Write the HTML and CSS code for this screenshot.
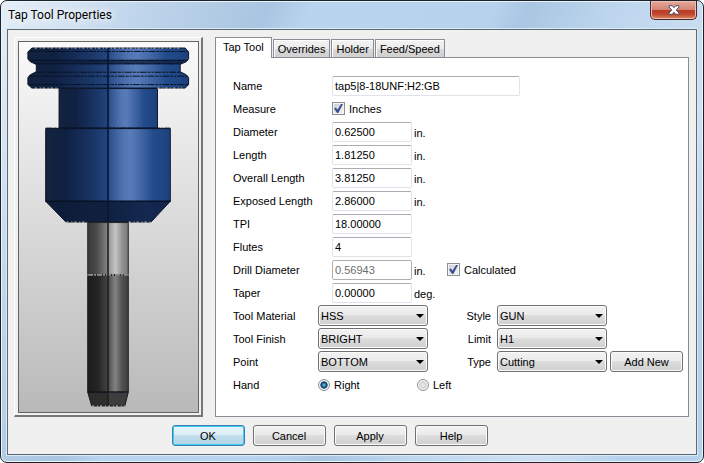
FILE: index.html
```html
<!DOCTYPE html>
<html lang="en">
<head>
<meta charset="utf-8">
<title>Tap Tool Properties</title>
<link rel="stylesheet" href="styles.css">
</head>
<body>
<main class="window">
  <header class="titlebar">
    <h1 class="title">Tap Tool Properties</h1>
    <button class="close" type="button" aria-label="Close">
      <svg width="12" height="10" viewBox="0 0 12 10"><path d="M1 .7h3.2L6 2.7 7.800 .7H11v1.200L8.300 5 11 8.100v1.200H7.800L6 7.300 4.200 9.300H1V8.100L3.700 5 1 1.900z" fill="#fff" stroke="#4a4f63" stroke-width="1"/></svg>
    </button>
  </header>
  <form class="client">
    <div class="content">
      <div class="preview">
        <svg class="tool" viewBox="18 41 181 374" role="img" aria-label="Tool preview">
          <defs>
            <linearGradient id="blue">
              <stop offset="0" stop-color="#13233f"/><stop offset=".16" stop-color="#0f2142"/><stop offset=".28" stop-color="#152b57"/><stop offset=".4" stop-color="#1b3869"/><stop offset=".5" stop-color="#234580"/><stop offset=".52" stop-color="#31528e"/><stop offset=".62" stop-color="#4f73b1"/><stop offset=".68" stop-color="#587cba"/><stop offset=".76" stop-color="#4468a6"/><stop offset=".86" stop-color="#234c8c"/><stop offset="1" stop-color="#1c407c"/>
            </linearGradient>
            <linearGradient id="steel">
              <stop offset="0" stop-color="#3b3b3b"/><stop offset=".2" stop-color="#484848"/><stop offset=".5" stop-color="#858585"/><stop offset=".54" stop-color="#9c9c9c"/><stop offset=".68" stop-color="#c4c4c4"/><stop offset=".85" stop-color="#929292"/><stop offset="1" stop-color="#777"/>
            </linearGradient>
            <linearGradient id="dark">
              <stop offset="0" stop-color="#1d1d1d"/><stop offset=".25" stop-color="#242424"/><stop offset=".5" stop-color="#454545"/><stop offset=".55" stop-color="#5b5b5b"/><stop offset=".68" stop-color="#828282"/><stop offset=".85" stop-color="#505050"/><stop offset="1" stop-color="#404040"/>
            </linearGradient>
            <linearGradient id="cone">
              <stop offset="0" stop-color="#0d1b36"/><stop offset=".5" stop-color="#102040"/><stop offset=".8" stop-color="#142850"/><stop offset="1" stop-color="#11244b"/>
            </linearGradient>
          </defs>
          <g stroke="#0b1424">
            <path d="M31 47H186L189.500 51V58L187 61 181 63.500V71L187 74 189.500 77V84L186 87.500H31L27 84V77L29.500 74 35.500 71V63.500L29.500 61 27 58V51Z" fill="url(#blue)"/>
            <path d="M29 59H188L181 63.500H35.500Z" fill="#0d1d3b" fill-opacity=".75" stroke="none"/>
            <path d="M58.500 88H158V128H58.500Z" fill="url(#blue)"/>
            <path d="M45 128.500H171V202H45Z" fill="url(#blue)"/>
            <path d="M45 202H171L151.500 223H65.500Z" fill="url(#cone)"/>
            <path d="M87.500 223.500H128.500V276H87.500Z" fill="url(#steel)" stroke="#222"/>
            <path d="M87.500 277H128.500V395H87.500Z" fill="url(#dark)" stroke="#181818"/>
            <path d="M87.500 395H128.500L125 409H91.500Z" fill="#2d2d2d" stroke="#181818"/>
            <path d="M108 395H128L124.500 408H108Z" fill="#3d3d3d" stroke="none"/>
          </g>
          <g fill="none" stroke="#071124" stroke-dasharray="7 1 3 1 2 1">
            <path d="M29 50.500H188M28 59.500H188M34 63H182M35 71.500H182M28 75.500H189M28 84H189M45 128H171M45 202H171"/>
            <path d="M88 395H128"/>
          </g>
          <path d="M34 47H183M34 87.500H58M158 87.500H183M66 223H87M129 223H151M92 409H125" stroke="#d5d8dc" stroke-dasharray="2 3 1 2" fill="none"/>
          <path d="M88 276.500H128" stroke="#e8e8e8" stroke-dasharray="5 1 2 1"/>
          <path d="M108 47V223" stroke="#0a1832" stroke-width="1.600"/>
          <path d="M108 223V409" stroke="#202020" stroke-width="1.600"/>
        </svg>
      </div>
      <section class="tabs">
        <div class="tablist" role="tablist">
          <button class="tab active" type="button" role="tab" aria-selected="true">Tap Tool</button>
          <button class="tab" type="button" role="tab" aria-selected="false">Overrides</button>
          <button class="tab" type="button" role="tab" aria-selected="false">Holder</button>
          <button class="tab" type="button" role="tab" aria-selected="false">Feed/Speed</button>
        </div>
        <div class="page" role="tabpanel">
          <div class="row"><label class="name" for="name">Name</label><input class="text wide" id="name" type="text" value="tap5|8-18UNF:H2:GB"></div>
          <div class="row"><span class="name">Measure</span><label class="check"><input type="checkbox" checked>Inches</label></div>
          <div class="row"><label class="name" for="dia">Diameter</label><input class="text" id="dia" type="text" value="0.62500"><span class="unit">in.</span></div>
          <div class="row"><label class="name" for="len">Length</label><input class="text" id="len" type="text" value="1.81250"><span class="unit">in.</span></div>
          <div class="row"><label class="name" for="overall">Overall Length</label><input class="text" id="overall" type="text" value="3.81250"><span class="unit">in.</span></div>
          <div class="row"><label class="name" for="exposed">Exposed Length</label><input class="text" id="exposed" type="text" value="2.86000"><span class="unit">in.</span></div>
          <div class="row"><label class="name" for="tpi">TPI</label><input class="text" id="tpi" type="text" value="18.00000"></div>
          <div class="row"><label class="name" for="flutes">Flutes</label><input class="text" id="flutes" type="text" value="4"></div>
          <div class="row"><label class="name" for="drill">Drill Diameter</label><input class="text" id="drill" type="text" value="0.56943" disabled><span class="unit">in.</span><label class="check"><input type="checkbox" checked>Calculated</label></div>
          <div class="row"><label class="name" for="taper">Taper</label><input class="text" id="taper" type="text" value="0.00000"><span class="unit">deg.</span></div>
          <div class="row choices"><label class="name" for="material">Tool Material</label><span class="combo"><select id="material"><option>HSS</option></select></span><label class="side" for="style">Style</label><span class="combo"><select id="style"><option>GUN</option></select></span></div>
          <div class="row choices"><label class="name" for="finish">Tool Finish</label><span class="combo"><select id="finish"><option>BRIGHT</option></select></span><label class="side" for="limit">Limit</label><span class="combo"><select id="limit"><option>H1</option></select></span></div>
          <div class="row choices"><label class="name" for="point">Point</label><span class="combo"><select id="point"><option>BOTTOM</option></select></span><label class="side" for="type">Type</label><span class="combo"><select id="type"><option>Cutting</option></select></span><button class="button add" type="button">Add New</button></div>
          <div class="row choices"><span class="name">Hand</span><label class="radio"><input type="radio" name="hand" checked>Right</label><label class="radio"><input type="radio" name="hand">Left</label></div>
        </div>
      </section>
    </div>
    <footer class="actions">
      <button class="button default" type="button">OK</button>
      <button class="button" type="button">Cancel</button>
      <button class="button" type="button">Apply</button>
      <button class="button" type="button">Help</button>
    </footer>
  </form>
</main>
</body>
</html>
```
FILE: styles.css
```css
* { box-sizing: border-box; }
body {
  margin: 0;
  background: #fff;
  color: #000;
  font: 11px/16px "Liberation Sans", Arial, sans-serif;
}
button, input, select { font: inherit; color: inherit; margin: 0; }

.window {
  display: flex;
  flex-direction: column;
  min-height: 100vh;
  padding: 0 6px 7px;
  border: 1px solid #1c2229;
  border-radius: 7px;
  background:
    linear-gradient(115deg, #e4eef8 0, #d3e2f1 70px, #bfd5eb 130px, #a9c5e1 245px, #b9d4ee 285px, #b6d2ed 450px, #a9c6e2 480px, #bdd6ee 560px, #cfe0f2 680px, #b5d1ec 760px);
  box-shadow: inset 0 0 0 1px #eaf4fc;
}
.titlebar { display: flex; justify-content: space-between; height: 28px; }
.title {
  margin: 0;
  padding: 5px 0 0 1px;
  font: 12px/18px Roboto, sans-serif;
  text-shadow: 0 0 8px #fff, 0 0 8px #fff;
}
.close {
  display: grid;
  place-items: center;
  width: 47px;
  height: 19px;
  padding: 0;
  border: 1px solid #4b2529;
  border-top: 0;
  border-radius: 0 0 5px 5px;
  background: linear-gradient(#e5a99c 0, #d58474 48%, #bb3a25 50%, #c24a30 75%, #dd8a63 100%);
  box-shadow: inset 0 0 0 1px #f0bdb1;
}

.client {
  flex: 1;
  display: flex;
  flex-direction: column;
  padding: 7px 7px 8px 6px;
  border: 1px solid #5a6972;
  background: #f0f0f0;
  box-shadow: 0 0 0 1px #dcebf8;
}
.content { flex: 1; display: flex; gap: 12px; }

.preview {
  flex: 0 0 189px;
  display: flex;
  padding: 3px 2px 2px 3px;
  border: 1px solid #fff;
  border-width: 1px 2px 2px 1px;
  border-right-color: #777;
  border-bottom-color: #777;
}
.tool {
  display: block;
  width: 100%;
  border: 1px solid #646464;
  background: linear-gradient(#fafafa, #b9b9b9);
}

.tabs { flex: 1; display: flex; flex-direction: column; }
.tablist { display: flex; align-items: flex-end; gap: 1px; height: 20px; }
.tab {
  height: 18px;
  padding: 0 4px;
  border: 1px solid #898c95;
  border-bottom: 0;
  background: linear-gradient(#f3f3f3 0, #ebebeb 50%, #dadada 52%, #cfcfcf 100%);
  box-shadow: inset 1px 1px 0 #fff;
}
.tab.active {
  position: relative;
  z-index: 1;
  height: 21px;
  margin-bottom: -1px;
  padding: 0 7px 3px;
  background: #fff;
}
.page {
  flex: 1;
  padding: 16px 4px 18px 17px;
  border: 1px solid #898c95;
  background: #fff;
}

.row { display: flex; align-items: center; height: 23px; }
.name { flex: 0 0 99px; }
.choices .name { flex-basis: 85px; }
.text {
  width: 80px;
  height: 20px;
  padding: 0 2px;
  border: 1px solid #e2e3ea;
  border-top-color: #abadb3;
  border-radius: 2px;
  background: #fff;
}
.text.wide { width: 188px; }
.text:disabled { border-color: #afafaf; color: #6d6d6d; }
.unit { width: 35px; padding: 3px 0 0 2px; }

.check, .radio { display: flex; align-items: center; gap: 4px; }
.check input {
  appearance: none;
  display: grid;
  place-items: center;
  width: 13px;
  height: 13px;
  border: 1px solid #8e8f8f;
  background: linear-gradient(135deg, #c9cdd3, #f6f6f6);
  box-shadow: inset 0 0 0 1px #f4f4f4;
}
.check input:checked::before {
  content: "";
  width: 9px;
  height: 9px;
  background: #3c5292;
  clip-path: polygon(0 50%, 20% 38%, 40% 62%, 78% 0, 100% 0, 48% 100%, 34% 100%);
}
.radio { width: 99px; }
.radio input {
  appearance: none;
  width: 12px;
  height: 12px;
  border: 1px solid #8e8f8f;
  border-radius: 50%;
  background: radial-gradient(#e9e9e9 0, #d2d5d9 50%, #fbfbfb 62%);
}
.radio input:checked {
  background: radial-gradient(circle at 50% 50%, #7fd0ee 0, #2474a8 25%, #0e2f4c 46%, #f0f3f6 56%);
}

.combo { position: relative; width: 110px; }
.combo::after {
  content: "";
  position: absolute;
  top: 9px;
  right: 4px;
  width: 8px;
  height: 4px;
  background: #000;
  clip-path: polygon(0 0, 100% 0, 50% 100%);
  pointer-events: none;
}
.combo select, .button {
  display: block;
  border: 1px solid #707070;
  border-radius: 3px;
  background: linear-gradient(#f2f2f2 0, #ebebeb 48%, #dddddd 50%, #cfcfcf 100%);
  box-shadow: inset 0 0 0 1px #fbfbfb;
}
.combo select {
  appearance: none;
  width: 100%;
  height: 21px;
  padding: 0 2px;
}
.side { width: 69px; padding-right: 6px; text-align: right; }
.button { width: 73px; height: 21px; padding: 0; }
.add { margin-left: 3px; }
.actions { display: flex; justify-content: center; gap: 8px; padding: 8px 44px 0 0; }
.default {
  border-color: #3c7fb1;
  background: linear-gradient(#e8f4fa 0, #dceef7 48%, #c3dfee 50%, #b3d2e4 100%);
  box-shadow: inset 0 0 0 1px #3fcdf4;
}
```
